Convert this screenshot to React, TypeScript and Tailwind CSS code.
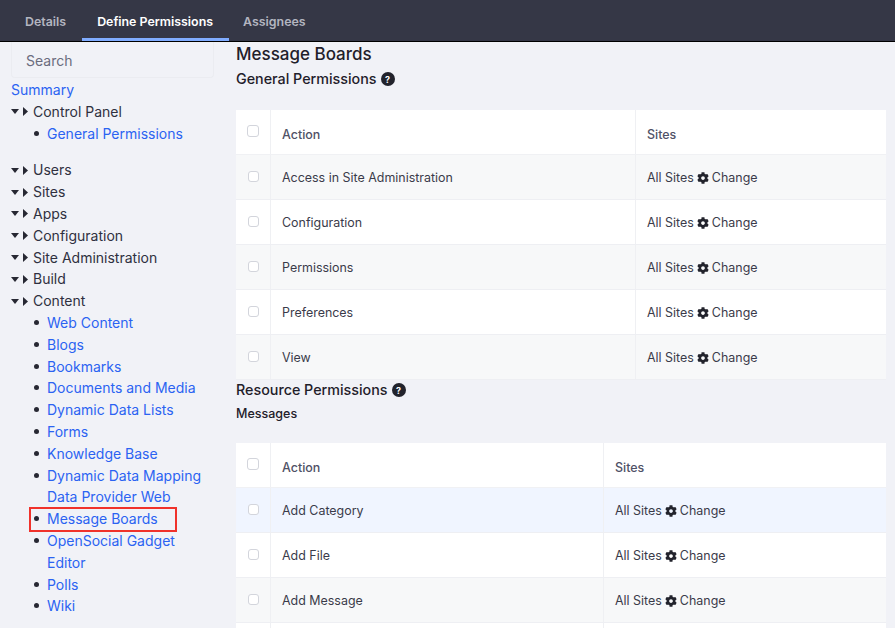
import { FaCog } from 'react-icons/fa';

const firstRows = ['Access in Site Administration', 'Configuration', 'Permissions', 'Preferences', 'View'];
const secondRows = ['Add Category', 'Add File', 'Add Message', ''];
const topItems = ['Users', 'Sites', 'Apps', 'Configuration', 'Site Administration', 'Build', 'Content'];
const contentItems = [
  'Web Content',
  'Blogs',
  'Bookmarks',
  'Documents and Media',
  'Dynamic Data Lists',
  'Forms',
  'Knowledge Base',
  'Dynamic Data Mapping Data Provider Web',
  'Message Boards',
  'OpenSocial Gadget Editor',
  'Polls',
  'Wiki',
];

function Carets() {
  return (
    <span className="flex w-[22px] shrink-0 items-center gap-[4px]">
      <svg width="8" height="5" viewBox="0 0 8 5" className="fill-[#272833]">
        <path d="M0 0h8L4 5z" />
      </svg>
      <svg width="5" height="9" viewBox="0 0 5 9" className="fill-[#272833]">
        <path d="M0 0l5 4.5L0 9z" />
      </svg>
    </span>
  );
}

function TreeHead({ label }: { label: string }) {
  return (
    <div className="flex items-center text-[#2f3040]">
      <Carets />
      <span>{label}</span>
    </div>
  );
}

function SubItem({ label, boxed }: { label: string; boxed?: boolean }) {
  return (
    <li className="relative pl-[36px] pr-[29px] text-[#2b63f2]">
      <span className="absolute left-[23px] top-[8px] h-[5px] w-[5px] rounded-full bg-[#272833]" />
      {boxed && <span className="absolute -top-px bottom-[-2px] left-[18px] w-[148px] border-[2px] border-[#f0322b]" />}
      {label}
    </li>
  );
}

function CheckBox({ big }: { big?: boolean }) {
  return (
    <span
      className={`block rounded-[3px] border border-[#d3d5dc] bg-white ${big ? 'h-[12px] w-[12px]' : 'h-[11px] w-[11px]'}`}
    />
  );
}

function HelpBadge() {
  return (
    <span className="ml-[4px] flex h-[14px] w-[14px] items-center justify-center rounded-full bg-[#22232c] text-[9px] font-bold leading-none text-white">
      ?
    </span>
  );
}

function PermissionTable({ rows, sitesWidth, highlight }: { rows: string[]; sitesWidth: string; highlight?: boolean }) {
  return (
    <div className="w-[650px] text-[12.45px]">
      <div className="flex h-[45px] border-b border-[#f0f1f4] bg-white text-[#4f5166]">
        <div className="flex w-[35px] shrink-0 justify-center border-r border-[#eff0f3] pt-[15px]">
          <CheckBox big />
        </div>
        <div className="flex flex-1 items-center border-r border-[#eff0f3] pl-[11px] pt-[6px] font-medium">Action</div>
        <div className={`flex shrink-0 items-center pl-[11px] pt-[6px] font-medium ${sitesWidth}`}>Sites</div>
      </div>
      {rows.map((row, i) => (
        <div
          key={row}
          className={`flex h-[45px] border-b border-[#eeeff3] text-[#3a3b4a] ${
            highlight && i === 0 ? 'bg-[#f0f5ff]' : i % 2 === 0 ? 'bg-[#f7f8f9]' : 'bg-white'
          }`}
        >
          <div className="flex w-[35px] shrink-0 justify-center border-r border-[#eff0f3] pt-[16px]">
            {row && <CheckBox />}
          </div>
          <div className="flex flex-1 items-center border-r border-[#eff0f3] pl-[11px] pt-[2px]">{row}</div>
          <div className={`flex shrink-0 items-center pl-[11px] pt-[2px] ${sitesWidth}`}>
            {row && (
              <>
                All Sites
                <FaCog className="mx-[3px] h-[12px] w-[12px] text-[#22232c]" />
                Change
              </>
            )}
          </div>
        </div>
      ))}
    </div>
  );
}

export default function App() {
  return (
    <div className="flex h-[628px] w-[895px] flex-col overflow-hidden bg-[#f1f2f7] font-['Inter',sans-serif]">
      <nav className="flex h-[42px] shrink-0 border-b border-black bg-[#353746] pl-[10px] text-[12.4px] font-semibold text-[#b3b5c0]">
        <a className="flex items-center px-[15px] pt-[3px]">Details</a>
        <a className="ml-[1px] flex items-center border-b-[3px] border-[#80acff] pl-[15px] pr-[16px] pt-[6px] text-white">
          Define Permissions
        </a>
        <a className="flex items-center px-[14px] pt-[3px]">Assignees</a>
      </nav>

      <div className="flex min-h-0 flex-1">
        <aside className="w-[236px] shrink-0 pl-[11px] text-[14px] leading-[21.8px]">
          <div className="flex h-[36px] w-[203px] items-center rounded-b-[4px] border border-t-0 border-[#ebecf1] pl-[14px] pt-[2px] text-[#6b6c7e]">
            Search
          </div>
          <div className="mt-[1px] text-[#2b63f2]">Summary</div>
          <TreeHead label="Control Panel" />
          <ul className="mb-[15px]">
            <SubItem label="General Permissions" />
          </ul>
          {topItems.map(item => (
            <TreeHead key={item} label={item} />
          ))}
          <ul>
            {contentItems.map(item => (
              <SubItem key={item} label={item} boxed={item === 'Message Boards'} />
            ))}
          </ul>
        </aside>

        <main className="min-w-0 flex-1">
          <h2 className="mt-[1px] text-[17px] font-medium leading-[22px] text-[#1f202a]">Message Boards</h2>
          <h3 className="mt-[3px] flex h-[22px] items-center text-[14.3px] font-medium text-[#1f202a]">
            General Permissions
            <HelpBadge />
          </h3>
          <div className="mt-[20px]">
            <PermissionTable rows={firstRows} sitesWidth="w-[250px]" />
          </div>
          <h3 className="flex h-[20px] items-center text-[14.3px] font-medium text-[#1f202a]">
            Resource Permissions
            <HelpBadge />
          </h3>
          <h4 className="mt-[4px] text-[12.5px] font-medium leading-[20px] text-[#1f202a]">Messages</h4>
          <div className="mt-[19px]">
            <PermissionTable rows={secondRows} sitesWidth="w-[282px]" highlight />
          </div>
        </main>
      </div>
    </div>
  );
}
